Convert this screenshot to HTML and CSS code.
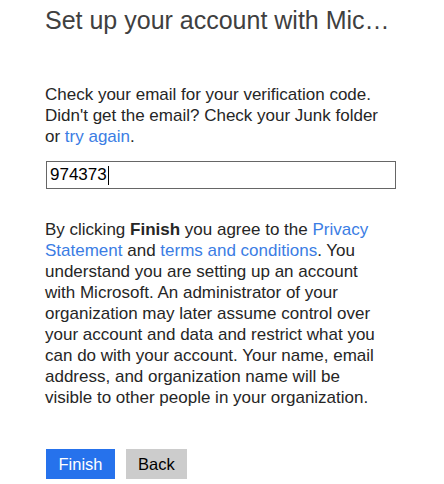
FILE: index.html
```html
<!DOCTYPE html>
<html lang="en">
<head>
<meta charset="utf-8">
<title>Set up your account</title>
<link rel="stylesheet" href="styles.css">
</head>
<body>
<main class="page">
  <h1 class="title">Set up your account with Microsoft</h1>
  <p class="text intro">Check your email for your verification code. Didn't get the email? Check your Junk folder or <a class="link" href="#">try again</a>.</p>
  <div class="field" role="textbox">974373<span class="caret"></span></div>
  <p class="text terms">By clicking <b>Finish</b> you agree to the <a class="link" href="#">Privacy Statement</a> and <a class="link" href="#">terms and conditions</a>. You understand you are setting up an account with Microsoft. An administrator of your organization may later assume control over your account and data and restrict what you can do with your account. Your name, email address, and organization name will be visible to other people in your organization.</p>
  <div class="actions">
    <button class="btn primary" type="button">Finish</button>
    <button class="btn secondary" type="button">Back</button>
  </div>
</main>
</body>
</html>
```

FILE: styles.css
```css
html, body {
  margin: 0;
  padding: 0;
  background: #fff;
}
body {
  font-family: "Liberation Sans", Arial, sans-serif;
  color: #262626;
}
.page {
  width: 351px;
  padding: 5px 0 0 45px;
}
.title {
  margin: 0;
  font-size: 25px;
  font-weight: normal;
  line-height: 30px;
  color: #404040;
  white-space: nowrap;
  overflow: hidden;
  text-overflow: ellipsis;
}
.text {
  margin: 0;
  max-width: 340px;
  font-size: 17px;
  line-height: 21px;
}
.intro {
  margin-top: 49px;
}
.link {
  color: #3b7de4;
  text-decoration: none;
}
.field {
  margin: 14px 0 0 1px;
  height: 26px;
  box-sizing: content-box;
  border: 1px solid #666;
  padding: 0 3px;
  font-size: 17px;
  line-height: 26px;
  color: #000;
  display: flex;
  align-items: center;
}
.caret {
  display: inline-block;
  width: 1px;
  height: 19px;
  background: #000;
  margin-left: 1px;
}
.terms {
  margin-top: 30px;
}
.actions {
  display: flex;
  gap: 11px;
  margin: 41px 0 0 1px;
}
.btn {
  height: 30px;
  border: none;
  border-radius: 0;
  padding: 0 12.5px;
  font-family: "Liberation Sans", Arial, sans-serif;
  font-size: 16.5px;
}
.primary {
  background: #2672ec;
  color: #fff;
}
.secondary {
  background: #ccc;
  color: #000;
  padding: 0 12px;
}
```
